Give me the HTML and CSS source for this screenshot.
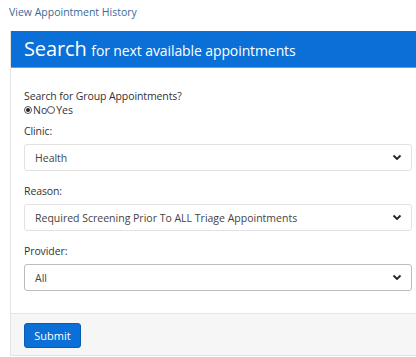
FILE: index.html
```html
<!DOCTYPE html>
<html lang="en">
<head>
    <meta charset="UTF-8">
    <meta name="viewport" content="width=device-width, initial-scale=1.0">
    <title>Search Appointments</title>
    <link rel="stylesheet" href="styles.css">
</head>
<body>
    <a class="history-link" href="#">View Appointment History</a>

    <div class="search-card">
        <div class="card-header">
            <span class="big">Search</span> for next available appointments
        </div>
        <form class="card-body">
            <div class="field">
                <label>Search for Group Appointments?</label>
                <div class="radios">
                    <span class="radio checked"></span>No<span class="radio"></span>Yes
                </div>
            </div>
            <div class="field">
                <label>Clinic:</label>
                <div class="select">Health <svg width="10" height="7" viewBox="0 0 10 7"><path d="M1.5 1.5 L5 5 L8.5 1.5" fill="none" stroke="#222" stroke-width="1.8"/></svg></div>
            </div>
            <div class="field">
                <label>Reason:</label>
                <div class="select">Required Screening Prior To ALL Triage Appointments <svg width="10" height="7" viewBox="0 0 10 7"><path d="M1.5 1.5 L5 5 L8.5 1.5" fill="none" stroke="#222" stroke-width="1.8"/></svg></div>
            </div>
            <div class="field">
                <label>Provider:</label>
                <div class="select focused">All <svg width="10" height="7" viewBox="0 0 10 7"><path d="M1.5 1.5 L5 5 L8.5 1.5" fill="none" stroke="#222" stroke-width="1.8"/></svg></div>
            </div>
        </form>
        <div class="card-footer">
            <button type="button">Submit</button>
        </div>
    </div>
</body>
</html>
```

FILE: styles.css
```css
body {
    font-family: 'Open Sans', sans-serif;
    font-size: 10.5px;
    color: #333;
    margin: 0;
    background: #fff;
}

.history-link {
    display: block;
    color: #3b6a98;
    text-decoration: none;
    padding: 5px 0 0 9px;
    height: 26px;
}

.search-card {
    margin-left: 10px;
    border-left: 1px solid #e4e4e4;
    border-bottom: 1px solid #e4e4e4;
}

.card-header {
    background: #0a6fd6;
    color: #fff;
    height: 36px;
    line-height: 36px;
    padding-left: 13px;
    font-size: 14px;
    border-bottom: 1px solid #5aa3e8;
    letter-spacing: -0.1px;
}

.card-header .big {
    font-size: 20px;
    margin-right: 1px;
}

.card-body {
    padding: 21px 4px 16px 13px;
    display: flex;
    flex-direction: column;
    gap: 7px;
}

.field label {
    display: block;
    margin-bottom: 6px;
    letter-spacing: -0.1px;
}

.field:first-child label {
    margin-bottom: 0;
}

.radios {
    display: flex;
    align-items: center;
    line-height: 14px;
}

.radio {
    width: 8px;
    height: 8px;
    border: 1px solid #555;
    border-radius: 50%;
    box-sizing: border-box;
    margin-right: 1px;
    position: relative;
}

.radio.checked::after {
    content: '';
    position: absolute;
    left: 1px;
    top: 1px;
    width: 4px;
    height: 4px;
    border-radius: 50%;
    background: #222;
}

.select {
    display: flex;
    justify-content: space-between;
    align-items: center;
    height: 27px;
    padding: 0 9px 0 10px;
    border: 1px solid #e2e2e2;
    border-radius: 3px;
    box-sizing: border-box;
    color: #444;
    margin-bottom: 6px;
}

.select.focused {
    border-color: #bcbcbc;
}

.card-footer {
    background: #f6f6f6;
    border-top: 1px solid #e6e6e6;
    padding: 9px 13px 7px;
}

button {
    background: #0a6fd6;
    color: #fff;
    border: 1px solid #0a5cb0;
    border-radius: 3px;
    font-family: inherit;
    font-size: 11px;
    width: 57px;
    height: 25px;
    padding: 0;
}
```
